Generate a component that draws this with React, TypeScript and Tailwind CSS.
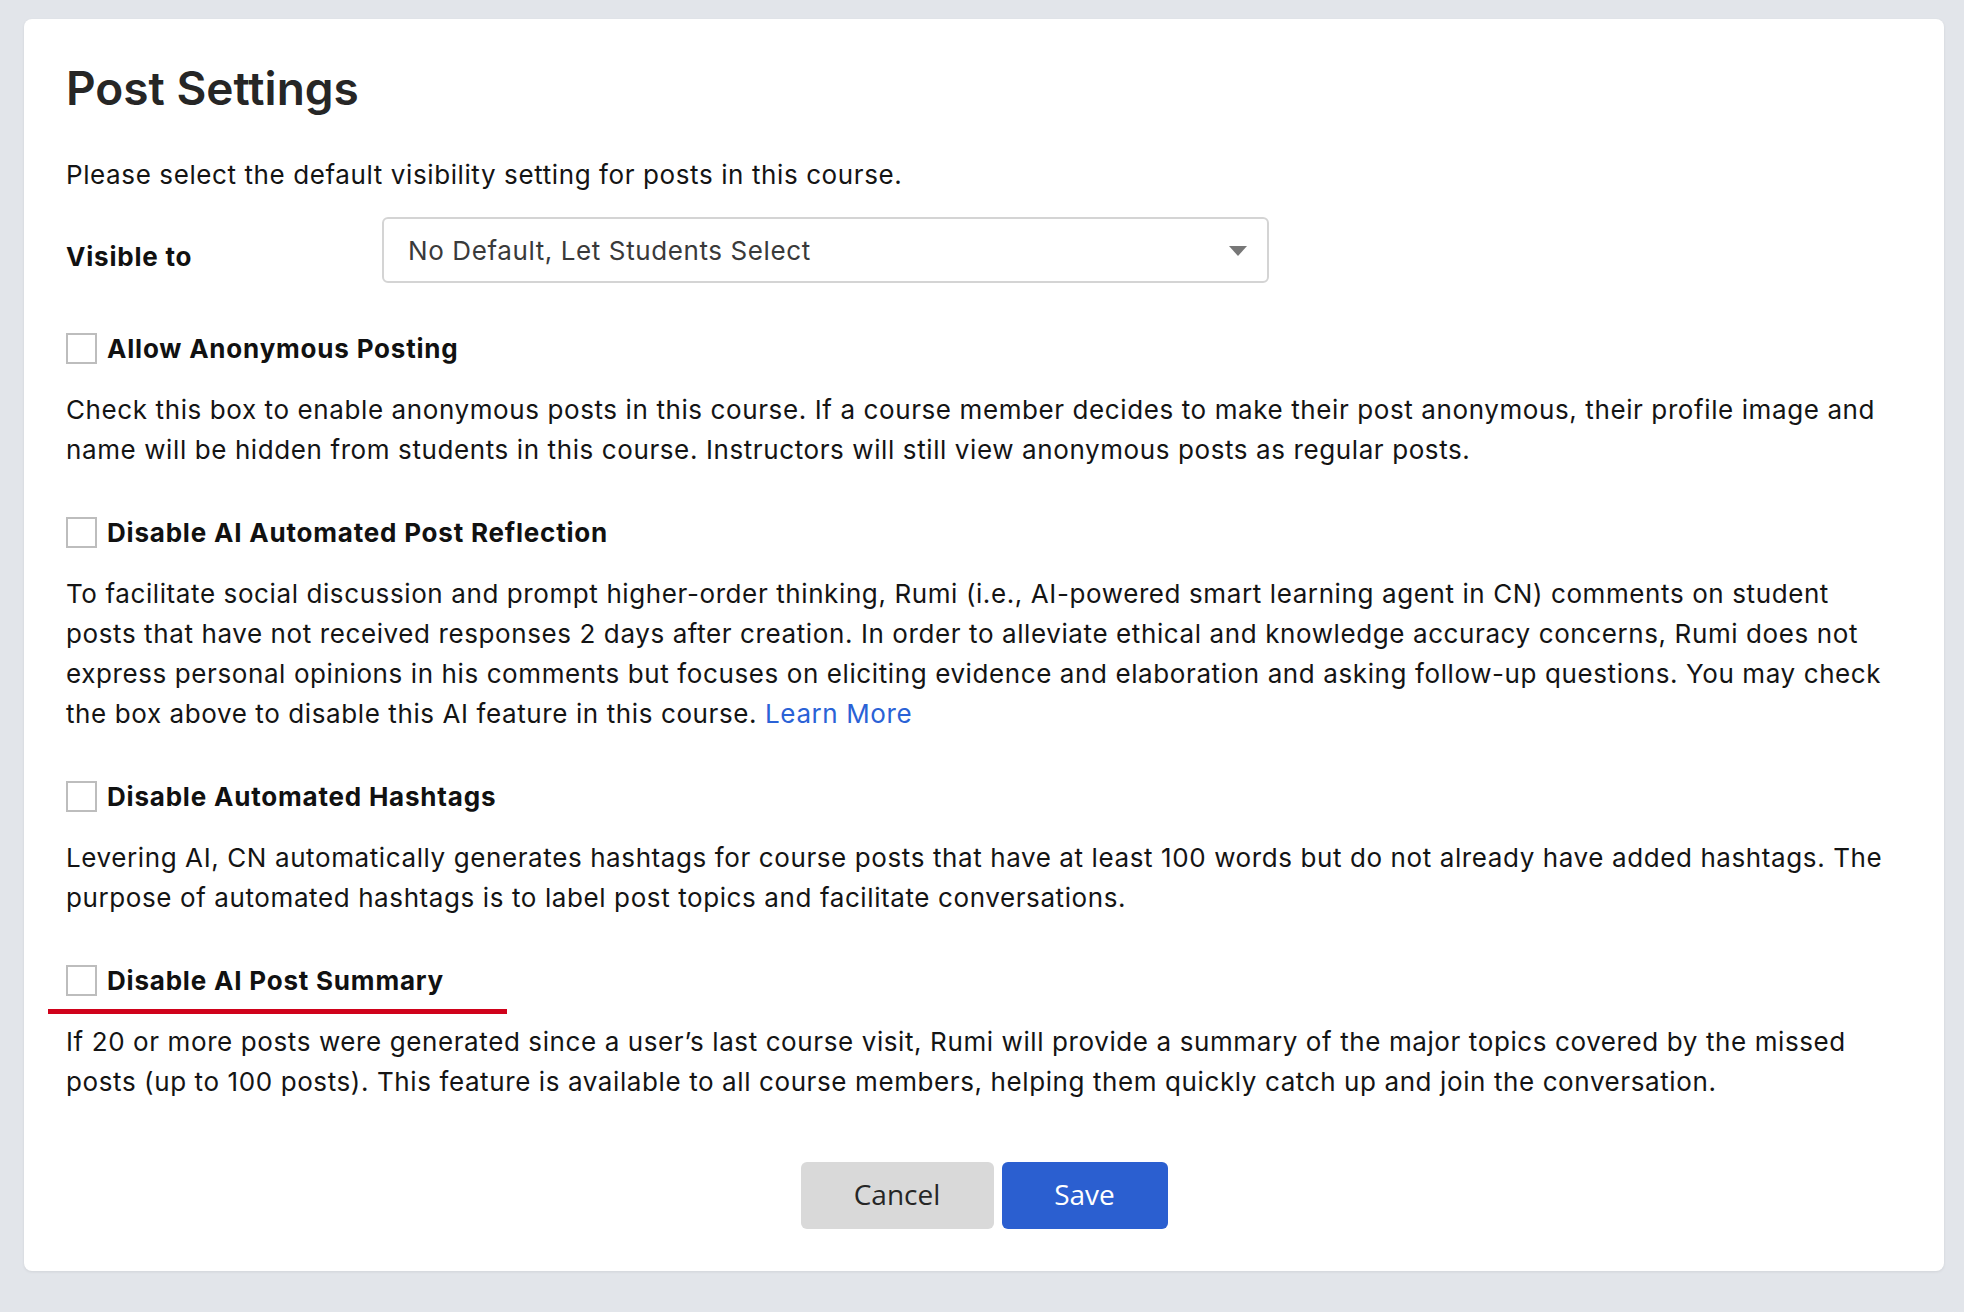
import { useState } from "react"

interface Setting {
  id: string
  label: string
  body: string
  link?: string
  flagged?: boolean
}

const SETTINGS: Setting[] = [
  {
    id: "anon",
    label: "Allow Anonymous Posting",
    body: "Check this box to enable anonymous posts in this course. If a course member decides to make their post anonymous, their profile image and name will be hidden from students in this course. Instructors will still view anonymous posts as regular posts.",
  },
  {
    id: "reflection",
    label: "Disable AI Automated Post Reflection",
    body: "To facilitate social discussion and prompt higher-order thinking, Rumi (i.e., AI-powered smart learning agent in CN) comments on student posts that have not received responses 2 days after creation. In order to alleviate ethical and knowledge accuracy concerns, Rumi does not express personal opinions in his comments but focuses on eliciting evidence and elaboration and asking follow-up questions. You may check the box above to disable this AI feature in this course.",
    link: "Learn More",
  },
  {
    id: "hashtags",
    label: "Disable Automated Hashtags",
    body: "Levering AI, CN automatically generates hashtags for course posts that have at least 100 words but do not already have added hashtags. The purpose of automated hashtags is to label post topics and facilitate conversations.",
  },
  {
    id: "summary",
    label: "Disable AI Post Summary",
    body: "If 20 or more posts were generated since a user\u2019s last course visit, Rumi will provide a summary of the major topics covered by the missed posts (up to 100 posts). This feature is available to all course members, helping them quickly catch up and join the conversation.",
    flagged: true,
  },
]

function SettingBlock({
  setting,
  checked,
  onToggle,
}: {
  setting: Setting
  checked: boolean
  onToggle: () => void
}) {
  return (
    <div>
      <div className="relative">
        <label className="flex h-[40px] items-center gap-[10px] cursor-pointer">
          <button
            type="button"
            onClick={onToggle}
            className="flex h-[31px] w-[31px] shrink-0 items-center justify-center border-2 border-[#bdbdbd] bg-white"
          >
            {checked && (
              <svg viewBox="0 0 16 16" className="h-5 w-5" fill="none" stroke="#2b5fd0" strokeWidth="2.5">
                <path d="M3 8.5l3.2 3.2L13 4.5" />
              </svg>
            )}
          </button>
          <span className="text-[26px] font-bold tracking-[0.8px] text-[#111]">{setting.label}</span>
        </label>
        {/* red annotation underline */}
        {setting.flagged && (
          <div className="absolute left-[-18px] top-[49px] h-[5px] w-[459px] bg-[#d0021b]" />
        )}
      </div>
      <p className="mt-[22px] text-[26px] leading-[40px] tracking-[0.6px] text-[#141414]">
        {setting.body}
        {setting.link && (
          <>
            {" "}
            <a href="#" className="text-[#2a62d6]">
              {setting.link}
            </a>
          </>
        )}
      </p>
    </div>
  )
}

export default function App() {
  const [checked, setChecked] = useState<Record<string, boolean>>({})

  return (
    <div
      className="min-h-screen bg-[#e2e5ea] pl-[24px] pr-[20px] pt-[19px] pb-[41px]"
      style={{ fontFamily: "Inter, 'Noto Sans', sans-serif" }}
    >
      <div className="rounded-[8px] bg-white px-[42px] pt-[41px] pb-[42px] shadow-[0_1px_3px_rgba(0,0,0,0.08)]">
        <h1 className="text-[46px] font-semibold leading-[56px] text-[#262626]">Post Settings</h1>

        <p className="mt-[39px] text-[26px] leading-[40px] tracking-[0.6px] text-[#141414]">
          Please select the default visibility setting for posts in this course.
        </p>

        <div className="mt-[22px] flex items-center">
          <span className="w-[316px] shrink-0 pt-[12px] text-[26px] font-bold tracking-[0.8px] text-[#111]">
            Visible to
          </span>
          <div className="relative flex h-[66px] w-[887px] items-center rounded-[6px] border-2 border-[#d4d4d4] pl-[24px] pr-[24px]">
            <span className="text-[26px] tracking-[0.6px] text-[#3a3a3a]">No Default, Let Students Select</span>
            <svg viewBox="0 0 18 10" className="absolute right-[20px] top-[27px] h-[10px] w-[18px]" fill="#777">
              <path d="M0 0h18L9 10z" />
            </svg>
          </div>
        </div>

        <div className="mt-[45px] flex flex-col gap-[42px]">
          {SETTINGS.map((s) => (
            <SettingBlock
              key={s.id}
              setting={s}
              checked={!!checked[s.id]}
              onToggle={() => setChecked((prev) => ({ ...prev, [s.id]: !prev[s.id] }))}
            />
          ))}
        </div>

        <div className="mt-[60px] flex justify-center gap-[8px]" style={{ fontFamily: "'Open Sans', 'Noto Sans', sans-serif" }}>
          <button type="button" className="h-[67px] w-[193px] rounded-[6px] bg-[#d9d9d9] pb-[3px] text-[28px] text-[#262626]">
            Cancel
          </button>
          <button type="button" className="h-[67px] w-[166px] rounded-[6px] bg-[#2b5fd0] pb-[3px] text-[28px] text-white">
            Save
          </button>
        </div>
      </div>
    </div>
  )
}
